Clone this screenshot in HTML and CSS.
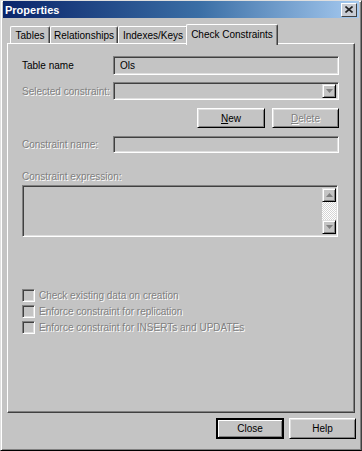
FILE: index.html
```html
<!DOCTYPE html>
<html>
<head>
<meta charset="utf-8">
<link rel="stylesheet" href="styles.css">
</head>
<body>
<div class="window">
  <div class="titlebar">
    <span class="title">Properties</span>
    <span class="close-x"><svg width="8" height="7" viewBox="0 0 8 7"><path d="M0.5 0.5 L7.5 6.5 M7.5 0.5 L0.5 6.5" stroke="#222" stroke-width="1.6"/></svg></span>
  </div>
  <div class="tabs">
    <div class="tab t1">Tables</div>
    <div class="tab t2">Relationships</div>
    <div class="tab t3">Indexes/Keys</div>
    <div class="tab active">Check Constraints</div>
  </div>
  <div class="panel">
    <div class="row r1">
      <span class="label">Table name</span>
      <div class="field tall"><span class="value">Ols</span></div>
    </div>
    <div class="row r2">
      <span class="label disabled">Selected constraint:</span>
      <div class="field combo">
        <span class="drop"><svg width="7" height="4" viewBox="0 0 7 4"><path d="M0 0 H7 L3.5 4 Z" fill="#808080"/></svg></span>
      </div>
    </div>
    <div class="row r3">
      <div class="btn"><u>N</u>ew</div>
      <div class="btn disabled"><u>D</u>elete</div>
    </div>
    <div class="row r4">
      <span class="label disabled">Constraint name:</span>
      <div class="field short"></div>
    </div>
    <div class="label disabled expr-label">Constraint expression:</div>
    <div class="textarea">
      <div class="scrollbar">
        <span class="sbtn"><svg width="7" height="4" viewBox="0 0 7 4"><path d="M0 4 H7 L3.5 0 Z" fill="#808080"/></svg></span>
        <span class="track"></span>
        <span class="sbtn"><svg width="7" height="4" viewBox="0 0 7 4"><path d="M0 0 H7 L3.5 4 Z" fill="#808080"/></svg></span>
      </div>
    </div>
    <div class="checks">
      <div class="check"><span class="box"></span><span class="disabled">Check existing data on creation</span></div>
      <div class="check"><span class="box"></span><span class="disabled">Enforce constraint for replication</span></div>
      <div class="check"><span class="box"></span><span class="disabled">Enforce constraint for INSERTs and UPDATEs</span></div>
    </div>
  </div>
  <div class="footer">
    <div class="btn default">Close</div>
    <div class="btn help">Help</div>
  </div>
</div>
</body>
</html>
```

FILE: styles.css
```css
html, body {
  margin: 0;
  padding: 0;
  background: #c4c4c4;
}

.window {
  width: 362px;
  height: 451px;
  box-sizing: border-box;
  background: #c4c4c4;
  border: 1px solid;
  border-color: #dfdfdf #404040 #000 #dfdfdf;
  box-shadow: inset 1px 1px #fff, inset -1px -1px #808080;
  padding: 0 2px 2px 2px;
  display: flex;
  flex-direction: column;
  font-family: "Liberation Sans", Arial, sans-serif;
  font-size: 10px;
  color: #000;
}

.titlebar {
  height: 17px;
  display: flex;
  align-items: center;
  justify-content: space-between;
  background: linear-gradient(to right, #0a246a 0%, #3a6ea5 55%, #a6caf0 100%);
  padding: 0 2px 0 2px;
}

.title {
  color: #fff;
  font-weight: bold;
  font-size: 11px;
}

.close-x {
  width: 16px;
  height: 14px;
  box-sizing: border-box;
  background: #c8ccd4;
  border: 1px solid;
  border-color: #fff #404040 #404040 #fff;
  display: flex;
  align-items: center;
  justify-content: center;
}

.tabs {
  margin-top: 6px;
  height: 19px;
  display: flex;
  align-items: flex-end;
  padding-left: 7px;
}

.tab {
  height: 17px;
  box-sizing: border-box;
  border-top: 1px solid #fff;
  border-left: 1px solid #fff;
  border-right: 1px solid #404040;
  box-shadow: inset -1px 0 #808080;
  border-radius: 2px 2px 0 0;
  display: flex;
  align-items: center;
  justify-content: center;
  white-space: nowrap;
}

.t1 { width: 40px; }
.t2 { width: 68px; }
.t3 { width: 70px; }

.tab.active {
  width: 92px;
  height: 21px;
  margin-left: -2px;
  margin-bottom: -2px;
  background: #c4c4c4;
  position: relative;
  z-index: 1;
  padding-bottom: 2px;
}

.panel {
  margin: 0 4px;
  height: 370px;
  box-sizing: border-box;
  border: 1px solid;
  border-color: #fff #404040 #404040 #fff;
  box-shadow: inset -1px -1px #808080;
  padding: 12px 15px 0 14px;
  display: flex;
  flex-direction: column;
}

.row {
  display: flex;
  align-items: center;
}

.label {
  width: 91px;
  white-space: nowrap;
  line-height: 13px;
}

.disabled {
  color: #808080;
  text-shadow: 1px 1px 0 #fff;
}

.field {
  width: 226px;
  box-sizing: border-box;
  border: 1px solid;
  border-color: #808080 #fff #fff #808080;
  box-shadow: inset 1px 1px #404040, inset -1px -1px #dfdfdf;
  display: flex;
  align-items: center;
}

.tall { height: 19px; }
.short { height: 17px; }

.value {
  padding-left: 6px;
}

.r2 { margin-top: 7px; }

.combo {
  height: 18px;
  justify-content: flex-end;
  padding-right: 2px;
}

.drop {
  width: 14px;
  height: 14px;
  box-sizing: border-box;
  border: 1px solid;
  border-color: #dfdfdf #000 #000 #dfdfdf;
  box-shadow: inset 1px 1px #fff, inset -1px -1px #808080;
  display: flex;
  align-items: center;
  justify-content: center;
}

.r3 {
  margin-top: 8px;
  justify-content: flex-end;
  gap: 7px;
}

.btn {
  width: 68px;
  height: 20px;
  box-sizing: border-box;
  border: 1px solid;
  border-color: #fff #000 #000 #fff;
  box-shadow: inset 1px 1px #dfdfdf, inset -1px -1px #808080;
  display: flex;
  align-items: center;
  justify-content: center;
}

.btn.disabled {
  width: 67px;
}

.r4 { margin-top: 8px; }

.expr-label {
  margin-top: 17px;
}

.textarea {
  margin-top: 2px;
  width: 316px;
  height: 52px;
  box-sizing: border-box;
  border: 1px solid;
  border-color: #808080 #fff #fff #808080;
  box-shadow: inset 1px 1px #404040, inset -1px -1px #dfdfdf;
  display: flex;
  justify-content: flex-end;
  padding: 2px 1px 2px 2px;
}

.scrollbar {
  width: 14px;
  display: flex;
  flex-direction: column;
}

.sbtn {
  height: 14px;
  box-sizing: border-box;
  border: 1px solid;
  border-color: #dfdfdf #000 #000 #dfdfdf;
  box-shadow: inset 1px 1px #fff, inset -1px -1px #808080;
  display: flex;
  align-items: center;
  justify-content: center;
}

.track {
  flex: 1;
  background: repeating-conic-gradient(#fff 0 25%, #d4d4d4 0 50%) 0 0 / 2px 2px;
}

.checks {
  margin-top: 50px;
  display: flex;
  flex-direction: column;
}

.check {
  height: 16px;
  display: flex;
  align-items: center;
  white-space: nowrap;
}

.box {
  width: 13px;
  height: 13px;
  box-sizing: border-box;
  border: 1px solid;
  border-color: #808080 #fff #fff #808080;
  box-shadow: inset 1px 1px #404040, inset -1px -1px #dfdfdf;
  margin-right: 4px;
  background: #c4c4c4;
}

.footer {
  margin-top: 5px;
  display: flex;
  justify-content: flex-end;
  gap: 5px;
  padding-right: 3px;
}

.footer .btn {
  height: 21px;
}

.btn.default {
  border: 2px solid #000;
  box-shadow: inset 1px 1px #fff, inset -1px -1px #808080;
}

.btn.help {
  width: 67px;
}
```
